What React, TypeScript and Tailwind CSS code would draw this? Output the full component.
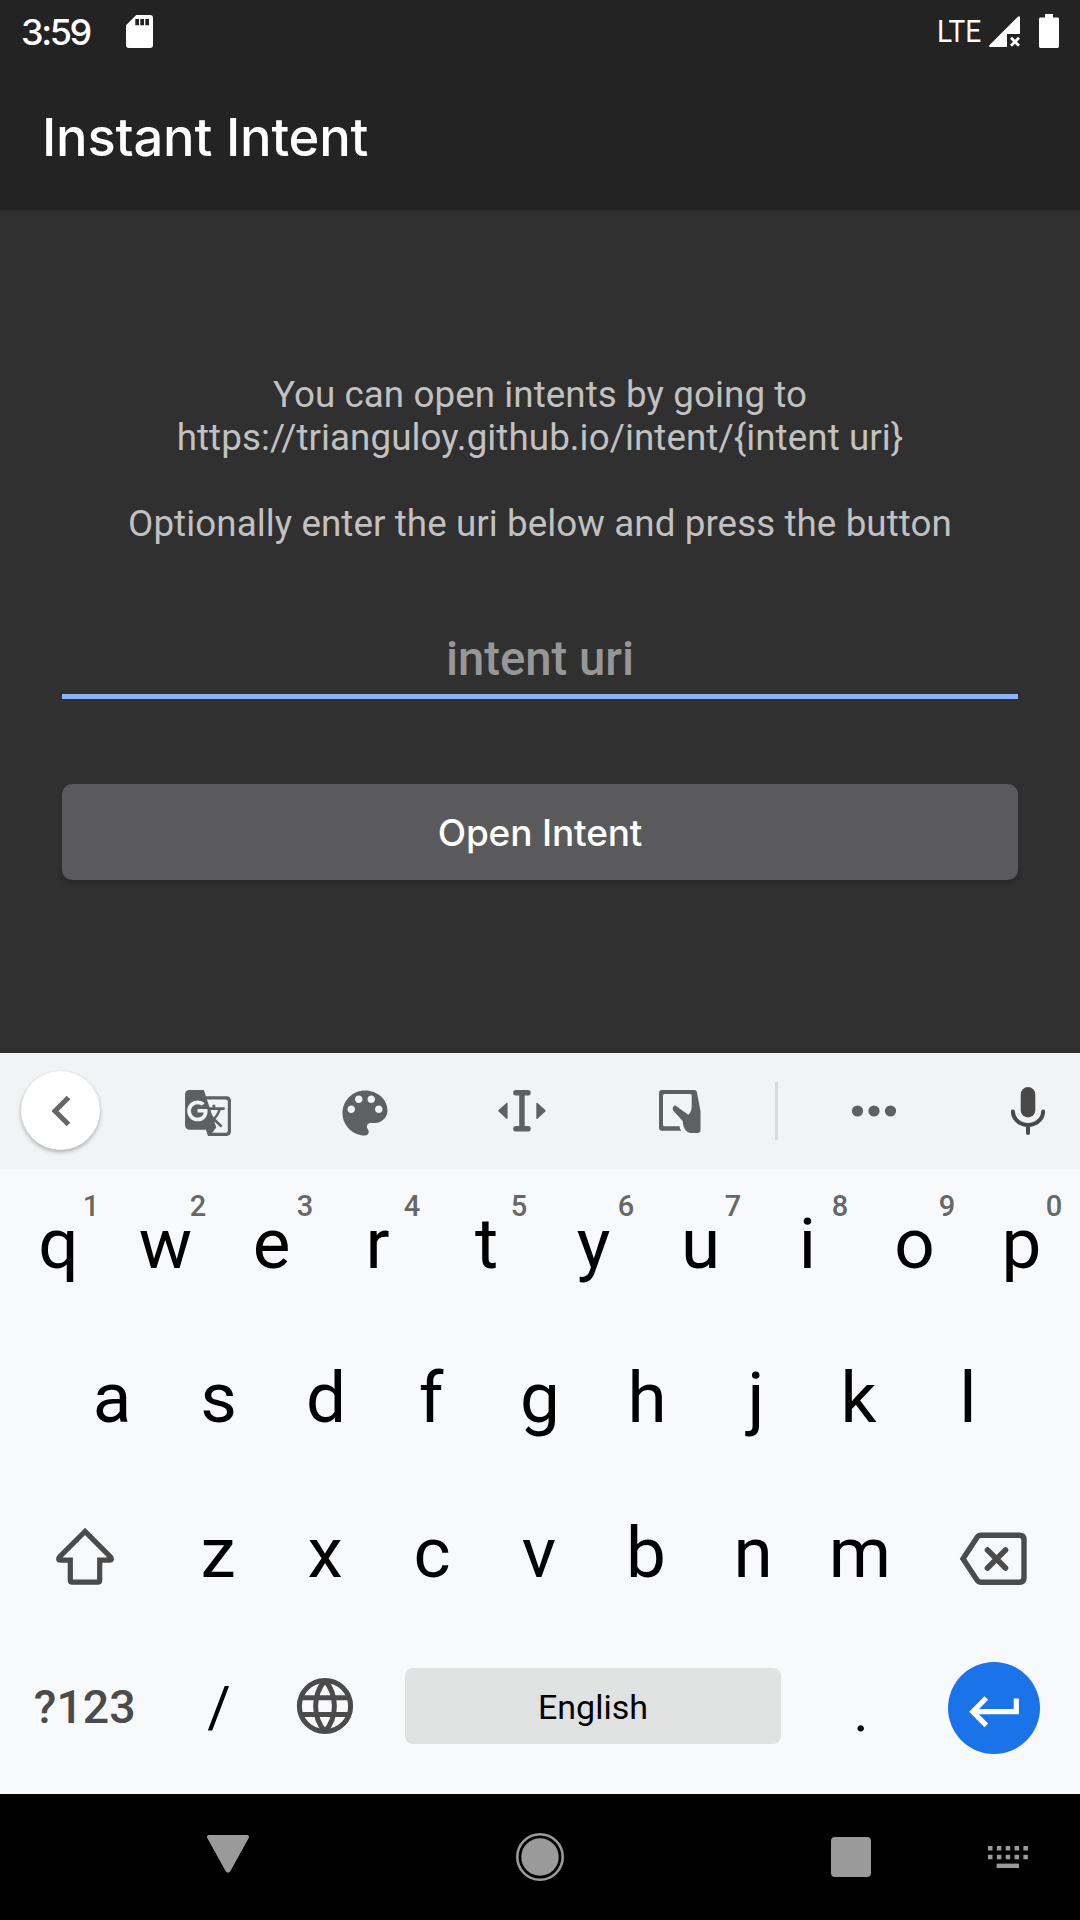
import React from "react";
import { MdGTranslate } from "react-icons/md";

const TOP_ROW = "qwertyuiop".split("");
const HOME_ROW = "asdfghjkl".split("");
const BOTTOM_ROW = "zxcvbnm".split("");

// Optical centring for glyphs with uneven side bearings.
const OPTICAL: Record<string, string> = {
  r: "pr-[4px]",
  f: "pr-[4px]",
  k: "pr-[5px]",
  j: "pl-[4px]",
  e: "pr-[2px]",
  s: "pr-[1px]",
};

function StatusBar() {
  return (
    <div className="flex h-[63px] items-start justify-between pl-[21px] pr-[21px] text-white">
      <div className="flex items-start">
        <span className="mt-[11px] w-[105px] whitespace-nowrap font-['Inter'] text-[36px] font-medium leading-[42px] tracking-[-2.4px]">3:59</span>
        <svg className="mt-[15px]" width="27" height="33" viewBox="0 0 27 33">
          <path fill="#fff" fillRule="evenodd" d="M10.2 0H24a3 3 0 0 1 3 3v27a3 3 0 0 1-3 3H3a3 3 0 0 1-3-3V10.2zM9.3 4v6.300h3.700V4zM14.300 4v6.300h3.700V4zM19.300 4v6.300H23V4z" />
        </svg>
      </div>
      <div className="flex items-start">
        <span className="mt-[11px] w-[52px] origin-left scale-x-[0.88] whitespace-nowrap font-['Roboto'] text-[32px] leading-[40px]">LTE</span>
        <svg className="mt-[16px]" width="31" height="31" viewBox="0 0 31 31">
          <path fill="#fff" d="M31 1v17H18v13H1.500C0 31-.3 29.800.8 28.700L28.800.8C29.800-.2 31 0 31 1z" />
          <path stroke="#fff" strokeWidth="2.800" d="m22 21.800 8 8m0-8-8 8" />
        </svg>
        <svg className="ml-[19px] mt-[14px]" width="20" height="34" viewBox="0 0 20 34">
          <path fill="#fff" d="M6 0h8v3.500h4.500c1 0 1.500.7 1.500 1.500v27.200c0 1-.7 1.800-1.800 1.800H1.800C.7 34 0 33.200 0 32.200V5c0-.8.5-1.500 1.500-1.500H6z" />
        </svg>
      </div>
    </div>
  );
}

function IntentForm() {
  return (
    <main className="h-[843px] px-[62px] pt-[163px] text-center font-['Roboto']">
      <p className="text-[36.75px] leading-[43px] tracking-[0.08px] text-[#c1c1c1]">
        You can open intents by going to
        <br />
        https://trianguloy.github.io/intent/&#123;intent uri&#125;
        <br />
        <br />
        Optionally enter the uri below and press the button
      </p>
      <div className="mt-[86px] h-[68px] border-b-[5px] border-[#8ab4f8] pt-px text-[47.25px] font-medium leading-[55px] text-[#979797]">
        intent uri
      </div>
      <button className="mt-[85px] block h-[96px] w-full rounded-[10px] bg-[#5a5a5c] pt-px font-['Inter'] text-[37px] font-medium tracking-[-0.15px] text-white shadow-[0_3px_5px_rgba(0,0,0,0.2)]">
        Open Intent
      </button>
    </main>
  );
}

function Toolbar() {
  return (
    <div className="flex h-[116px] items-center bg-[#f1f3f5] text-[#5f6062]">
      <div className="w-[129px] pb-px pl-[21px]">
        <div className="flex h-[79px] w-[79px] items-center justify-center rounded-full bg-white shadow-[0_2px_4px_rgba(0,0,0,0.3)]">
          <svg width="20" height="32" viewBox="0 0 20 32">
            <path d="M17.500 2.500 4 16l13.500 13.500" fill="none" stroke="#666" strokeWidth="5" />
          </svg>
        </div>
      </div>
      <div className="flex w-[157.500px] justify-center pt-[4px]">
        <MdGTranslate size={50} />
      </div>
      <div className="flex w-[157.500px] justify-center pt-[3px]">
        <svg width="60" height="60" viewBox="0 0 24 24" fill="currentColor">
          <path d="M12 3c-4.970 0-9 4.030-9 9s4.030 9 9 9c.83 0 1.500-.67 1.500-1.500 0-.39-.15-.74-.39-1.010-.23-.26-.38-.61-.38-.99 0-.83.67-1.500 1.500-1.500H16c2.760 0 5-2.240 5-5 0-4.420-4.030-8-9-8zm-5.500 9c-.83 0-1.500-.67-1.500-1.500S5.670 9 6.500 9 8 9.670 8 10.500 7.330 12 6.500 12zm3-4C8.670 8 8 7.330 8 6.500S8.670 5 9.500 5s1.500.67 1.500 1.500S10.330 8 9.500 8zm5 0c-.83 0-1.500-.67-1.500-1.500S13.670 5 14.500 5s1.500.67 1.500 1.500S15.330 8 14.500 8zm3 4c-.83 0-1.500-.67-1.500-1.500S16.670 9 17.500 9s1.500.67 1.500 1.500-.67 1.500-1.500 1.500z" />
        </svg>
      </div>
      <div className="flex w-[157.500px] justify-center pr-[2px]">
        <svg width="48" height="42" viewBox="0 0 48 42" fill="currentColor">
          <rect x="15.200" width="17.500" height="5.400" rx="2.500" />
          <rect x="15.200" y="36" width="17.500" height="5.400" rx="2.500" />
          <rect x="21.200" y="2" width="5.500" height="37" />
          <path d="M9.600 13.500v14.800c0 .8-.6 1-1.200.5L.6 21.600c-.5-.5-.5-1 0-1.500L8.400 13c.6-.5 1.200-.3 1.200.5zM38.300 13.500v14.800c0 .8.6 1 1.200.5l7.800-7.200c.5-.5.5-1 0-1.500L39.500 13c-.6-.5-1.200-.3-1.200.5z" />
        </svg>
      </div>
      <div className="flex w-[157.500px] justify-center">
        <svg width="42" height="43" viewBox="0 0 42 43" fill="currentColor">
          <path d="M3 0h32.500q2 0 2.400 2L41.500 21v19q0 3-3 3h-6c-6 0-8.500-6-8.800-12l-8.700-9.500c-2-2.300-1.500-5 1-6.300l13.300 9.500c2.400-1.800 3.400-5 3.400-9V5.500q0-1.500-1.500-1.500H5.500Q4 4 4 5.500v29.300q0 1.500 1.500 1.500h15c.3 1.700.8 3.300 1.600 4.400H3q-3 0-3-3V3q0-3 3-3z" />
        </svg>
      </div>
      <div className="ml-[15.500px] h-[58px] w-[3px] bg-[#d3dbdb]" />
      <div className="flex w-[193px] justify-center">
        <svg width="46" height="12" viewBox="0 0 46 12" fill="currentColor">
          <circle cx="6.500" cy="6" r="5.600" />
          <circle cx="23" cy="6" r="5.600" />
          <circle cx="39.500" cy="6" r="5.600" />
        </svg>
      </div>
      <div className="ml-[40.500px]">
        <svg width="34" height="48" viewBox="0 0 34 48">
          <rect x="9.700" y="0" width="14.600" height="30.500" rx="7.300" fill="#494949" />
          <path d="M1.900 24.500a15.100 13.500 0 0 0 30.200 0M17 39v7" fill="none" stroke="#494949" strokeWidth="4" strokeLinecap="round" />
        </svg>
      </div>
    </div>
  );
}

function LetterKey({ label, hint }: { label: string; hint?: string }) {
  return (
    <div className={`relative flex h-full w-[107px] items-center justify-center text-[71px] leading-[84px] text-black ${OPTICAL[label] ?? ""}`}>
      {label}
      {hint && (
        <span className="absolute left-[76px] top-[22px] w-[20px] text-center text-[29px] font-medium leading-[30px] text-[#666868]">{hint}</span>
      )}
    </div>
  );
}

function Keyboard() {
  return (
    <section className="font-['Roboto']">
      <Toolbar />
      <div className="h-[625px] bg-[#f8f9fb] px-[5px]">
        <div className="flex h-[150px]">
          {TOP_ROW.map((k, i) => (
            <LetterKey key={k} label={k} hint={String((i + 1) % 10)} />
          ))}
        </div>
        <div className="flex h-[157px] justify-center">
          {HOME_ROW.map((k) => (
            <LetterKey key={k} label={k} />
          ))}
        </div>
        <div className="flex h-[154px] items-center">
          <div className="flex w-[159.500px] justify-center pl-px pt-[5px]">
            <svg width="60" height="58" viewBox="0 0 60 58">
              <path d="M30 4.500 4.800 29.700c-1.800 1.800-1.500 3.500.7 3.500H15.300v20q0 2 2 2h25.400q2 0 2-2v-20h9.800c2.200 0 2.500-1.700.7-3.500z" fill="none" stroke="#4b4b4b" strokeWidth="5.200" />
            </svg>
          </div>
          {BOTTOM_ROW.map((k) => (
            <LetterKey key={k} label={k} />
          ))}
          <div className="flex w-[160.500px] justify-center pr-[2px] pt-[11px]">
            <svg width="68" height="54" viewBox="0 0 68 54">
              <path d="M22 3.300h38.500q4.500 0 4.500 4.500v38q0 4.500-4.500 4.500H22q-2.500 0-4-2.200L4 26.800 18 5.500q1.500-2.200 4-2.200z" fill="none" stroke="#4b4b4b" strokeWidth="5.400" />
              <path d="m28.500 18 18 18m0-18-18 18" stroke="#4b4b4b" strokeWidth="5.600" strokeLinecap="round" />
            </svg>
          </div>
        </div>
        <div className="flex h-[152px] items-center">
          <div className="w-[160.500px] pr-px pt-px text-center text-[46.500px] font-medium leading-[54px] text-[#4b4b4b]">?123</div>
          <div className="w-[107px] pt-[4px] text-center text-[57px] leading-[66px]">/</div>
          <div className="flex w-[107px] justify-center pr-[2px]">
            <svg width="58" height="58" viewBox="0 0 58 58" fill="none" stroke="#4b4b4b" strokeWidth="5">
              <circle cx="29" cy="29" r="25.600" />
              <path d="M4 20.800h50M4 37.500h50M29 3.500c-12.500 14-12.500 37 0 51M29 3.500c12.500 14 12.500 37 0 51" />
            </svg>
          </div>
          <div className="ml-[25.500px] flex h-[76px] w-[376px] items-center justify-center rounded-[8px] bg-[#e0e2e1] pt-px text-[34px] leading-[40px]">
            English
          </div>
          <div className="ml-[26.500px] w-[107px] pt-[11px] text-center text-[57px] leading-[66px]">.</div>
          <div className="flex w-[160.500px] justify-center pr-[2px] pt-[4px]">
            <div className="flex h-[92px] w-[92px] items-center justify-center rounded-full bg-[#1a73e8] pt-[7px]">
              <svg width="50" height="32" viewBox="0 0 50 32" fill="none" stroke="#fff" strokeWidth="5.200">
                <path d="M17.300 2 3.800 15.700l13.500 13.700M4 15.700h43.300V2.500" />
              </svg>
            </div>
          </div>
        </div>
      </div>
    </section>
  );
}

function NavigationBar() {
  return (
    <nav className="grid h-[126px] grid-cols-[457px_166px_457px] items-center bg-black text-[#9a9a9a]">
      <svg className="ml-[207px] -mt-[6px]" width="42" height="38" viewBox="0 0 42 38" fill="currentColor">
        <path d="M2 0h38c2 0 2.500 1.800 1.600 3.300L23.300 36.200c-1 1.800-3.600 1.800-4.600 0L.4 3.300C-.5 1.800 0 0 2 0z" />
      </svg>
      <svg className="mx-auto" width="48" height="48" viewBox="0 0 48 48">
        <circle cx="24" cy="24" r="22.700" fill="none" stroke="currentColor" strokeWidth="2.600" />
        <circle cx="24" cy="24" r="18.700" fill="currentColor" />
      </svg>
      <div className="flex items-center">
        <div className="ml-[208px] h-[40px] w-[40px] rounded-[4px] bg-[#9a9a9a]" />
        <svg className="ml-[117px]" width="40" height="22" viewBox="0 0 40 22" fill="currentColor">
          {[0, 1, 2, 3, 4].map((c) => (
            <g key={c}>
              <rect x={c * 8.850} y="0" width="4.500" height="4.500" />
              <rect x={c * 8.850} y="8.800" width="4.500" height="4.500" />
            </g>
          ))}
          <rect x="8.600" y="17.600" width="22.400" height="4.400" />
        </svg>
      </div>
    </nav>
  );
}

export default function App() {
  return (
    <div className="h-[1920px] w-[1080px] overflow-hidden bg-[#303030]">
      <header className="h-[210px] bg-[#232323] shadow-[0_1px_3px_rgba(0,0,0,0.15)]">
        <StatusBar />
        <h1 className="px-[42px] pt-px font-['Inter'] text-[52.500px] font-medium leading-[147px] tracking-[-0.2px] text-white">Instant Intent</h1>
      </header>
      <IntentForm />
      <Keyboard />
      <NavigationBar />
    </div>
  );
}
